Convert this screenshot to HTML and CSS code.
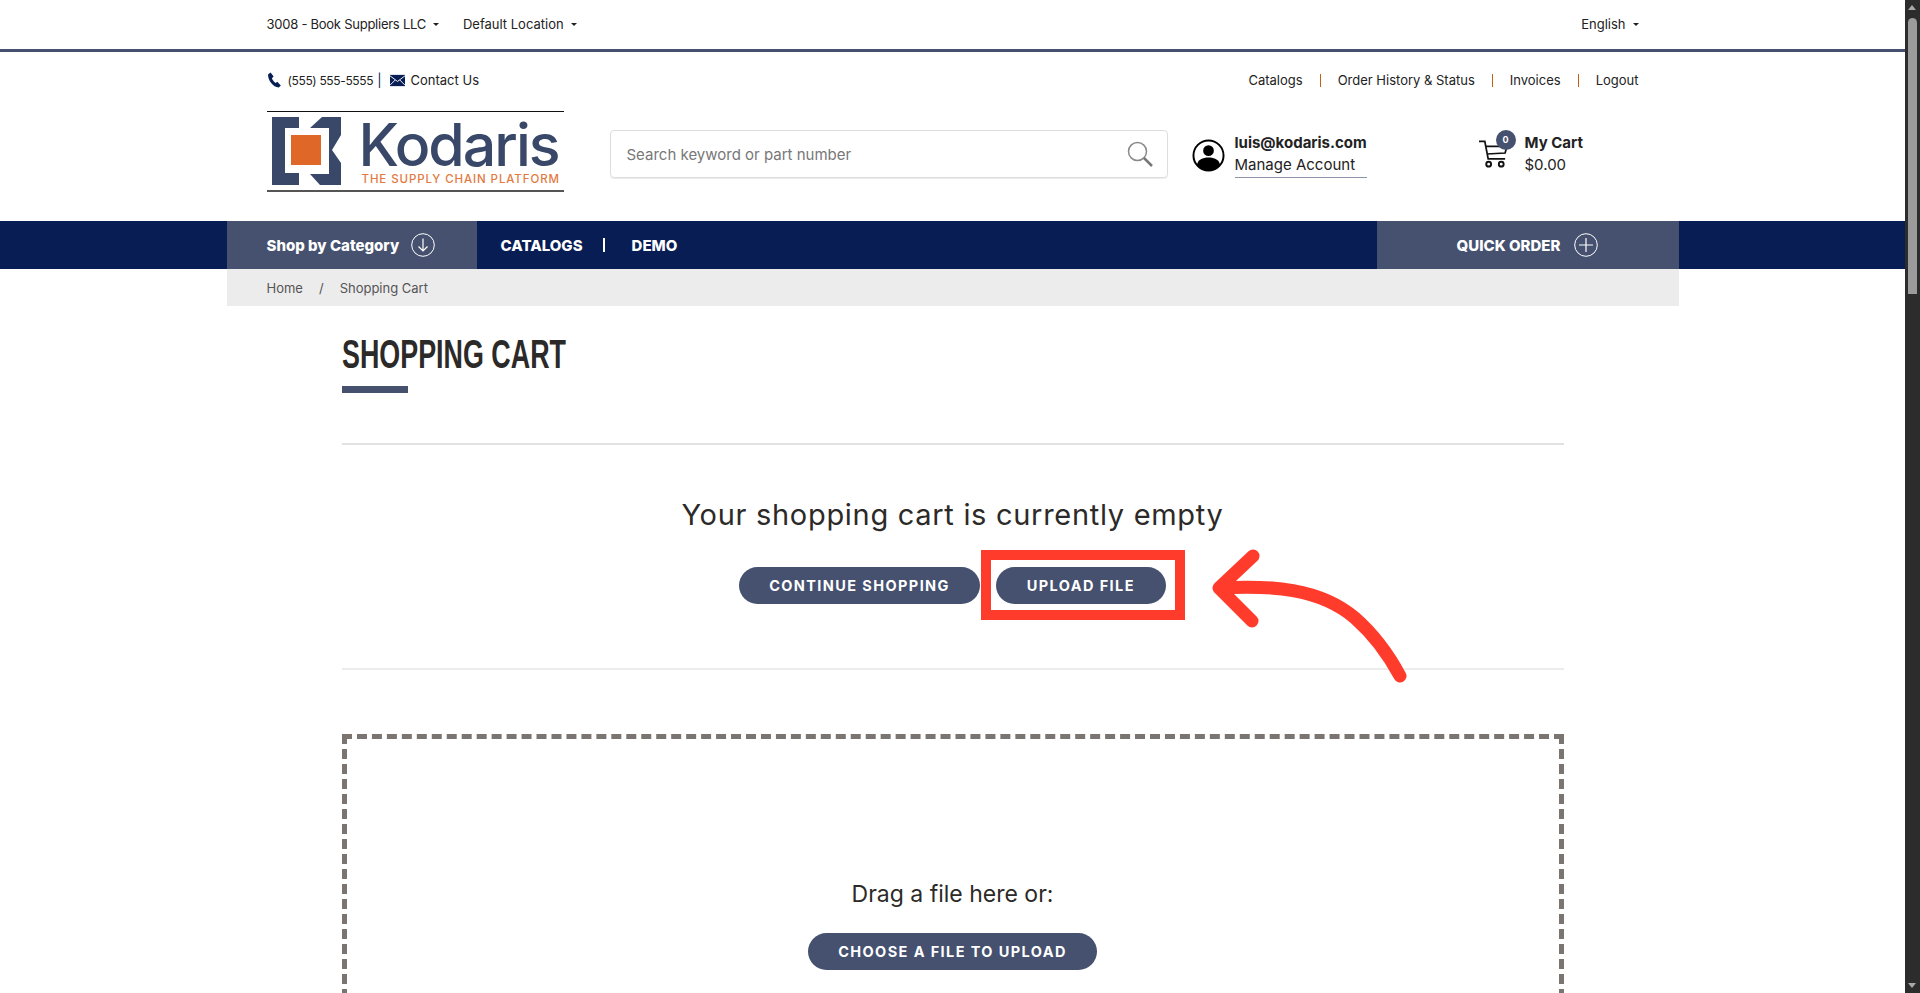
FILE: index.html
```html
<!DOCTYPE html>
<html lang="en">
<head>
  <meta charset="UTF-8">
  <meta name="viewport" content="width=device-width, initial-scale=1.0">
  <title>Shopping Cart</title>
  <link rel="stylesheet" href="styles.css">
</head>
<body>
  <div class="scrollbar">
    <span class="arrow-up"></span>
    <span class="thumb"></span>
    <span class="arrow-down"></span>
  </div>

  <div class="topbar">
    <div class="inner topbar-row">
      <div class="topbar-left">
        <span class="caret company">3008 - Book Suppliers LLC</span>
        <span class="caret">Default Location</span>
      </div>
      <span class="caret">English</span>
    </div>
  </div>

  <header class="inner header">
    <div class="contact-row">
      <div class="contact">
        <svg class="ico-phone" viewBox="0 0 16 16"><path fill="#071d54" d="M1 2.6 3.6.6l3 4-1.7 1.600c.5 1.700 2 3.700 3.700 4.700l1.700-1.200 3.500 3.700-2 2.200C6 15.300 1 8.500 1 2.600z"/></svg>
        <span class="phone">(555) 555-5555</span>
        <span class="bar">|</span>
        <svg class="ico-mail" viewBox="0 0 16 12"><path fill="#071d54" d="M0 0h16v12H0z"/><path fill="none" stroke="#fff" d="M0 1l8 6 8-6M0 11l5.500-5.500M16 11l-5.500-5.500"/></svg>
        <span>Contact Us</span>
      </div>
      <nav class="links">
        <a>Catalogs</a><i></i><a>Order History &amp; Status</a><i></i><a>Invoices</a><i></i><a>Logout</a>
      </nav>
    </div>

    <div class="brand-row">
      <div class="logo">
        <svg class="logo-mark" viewBox="0 0 70 70">
          <path fill="#394868" d="M0 1h27v11H13v45h14v12H0z"/>
          <path fill="#394868" d="M38 12 50 1h19v18L60 34l9 13v22H48L38 58h19V12z"/>
          <path fill="#df6727" d="M19 19h30v30H19z"/>
        </svg>
        <div class="logo-text">
          <span class="logo-name">Kodaris</span>
          <span class="logo-tag">THE SUPPLY CHAIN PLATFORM</span>
        </div>
      </div>

      <div class="search">
        <span>Search keyword or part number</span>
        <svg class="search-ico" viewBox="0 0 26 26"><circle cx="10.500" cy="10.500" r="9" fill="none" stroke="#8a8a8a" stroke-width="1.500"/><path d="M17 17l8 8" stroke="#777" stroke-width="2.500" fill="none"/></svg>
      </div>

      <div class="account">
        <svg class="account-ico" viewBox="0 0 34 34">
          <circle cx="17" cy="17" r="15.500" fill="#fff" stroke="#000" stroke-width="2"/>
          <circle cx="17" cy="12" r="5.500"/>
          <path d="M5 27c1-6 6-8 12-8s11 2 12 8c-3 4-7 6-12 6S8 31 5 27z"/>
        </svg>
        <div class="account-text">
          <strong>luis@kodaris.com</strong>
          <span>Manage Account</span>
        </div>
      </div>

      <div class="cart">
        <div class="cart-ico">
          <svg viewBox="0 0 30 28"><path fill="none" stroke="#111" stroke-width="1.800" d="M0 1h6l3.500 18H27M7 6h22l-2 7-19 1"/><circle cx="10" cy="24.500" r="2.500" fill="none" stroke="#111" stroke-width="2"/><circle cx="23" cy="24.500" r="2.500" fill="none" stroke="#111" stroke-width="2"/></svg>
          <span class="badge">0</span>
        </div>
        <div class="cart-text">
          <strong>My Cart</strong>
          <span>$0.00</span>
        </div>
      </div>
    </div>
  </header>

  <div class="navbar">
    <div class="inner nav-row">
      <div class="nav-block shop">
        <span>Shop by Category</span>
        <svg class="nav-ico" viewBox="0 0 24 24"><circle cx="12" cy="12" r="11.300" fill="none" stroke="#fff"/><path fill="none" stroke="#fff" stroke-width="1.200" d="M12 5.500v12.500M7.500 13.500 12 18l4.500-4.500"/></svg>
      </div>
      <div class="nav-links">
        <span>CATALOGS</span>
        <span class="nav-sep"></span>
        <span>DEMO</span>
      </div>
      <div class="nav-block quick">
        <span>QUICK ORDER</span>
        <svg class="nav-ico" viewBox="0 0 24 24"><circle cx="12" cy="12" r="11.300" fill="none" stroke="#fff"/><path fill="none" stroke="#fff" stroke-width="1.200" d="M12 5v14M5 12h14"/></svg>
      </div>
    </div>
  </div>

  <div class="inner crumbs">
    <span>Home</span>
    <span>/</span>
    <span>Shopping Cart</span>
  </div>

  <main class="content">
    <h1>SHOPPING CART</h1>
    <div class="title-bar"></div>
    <hr class="rule-first">
    <h2>Your shopping cart is currently empty</h2>
    <div class="actions">
      <a class="btn">CONTINUE SHOPPING</a>
      <a class="btn btn-upload">UPLOAD FILE</a>
    </div>
    <hr class="rule-second">
    <div class="dropzone">
      <p>Drag a file here or:</p>
      <a class="btn">CHOOSE A FILE TO UPLOAD</a>
    </div>
  </main>

  <!-- annotation drawn over the page -->
  <div class="highlight"></div>
  <svg class="pointer" viewBox="0 0 220 150">
    <path fill="none" stroke="#ff3b2c" stroke-width="13" stroke-linecap="round" stroke-linejoin="round" d="M58 13 24 45l33 33M24 45C75 42 125 45 160 75c25 22 38 45 45 58"/>
  </svg>
</body>
</html>
```

FILE: styles.css
```css
* {
  box-sizing: border-box;
}
html, body {
  height: 993px;
  overflow: hidden;
}
body {
  margin: 0;
  background-color: white;
  color: #222;
  font-family: Inter, "Liberation Sans", sans-serif;
  font-size: 13px;
  padding-right: 15px;
}
.inner {
  width: 1452px;
  margin: 0 auto;
}
.scrollbar {
  position: fixed;
  top: 0;
  right: 0;
  bottom: 0;
  width: 15px;
  background-color: #2c2c2c;
  z-index: 5;
}
.thumb {
  position: absolute;
  top: 18px;
  left: 3px;
  width: 9px;
  height: 276px;
  border-radius: 5px 5px 0 0;
  background-color: #9b9b9b;
}
.arrow-up, .arrow-down {
  position: absolute;
  left: 3px;
  border-left: 4.500px solid transparent;
  border-right: 4.500px solid transparent;
}
.arrow-up {
  top: 5px;
  border-bottom: 5px solid #a8a8a8;
}
.arrow-down {
  bottom: 5px;
  border-top: 5px solid #a8a8a8;
}

.topbar {
  height: 52px;
  border-bottom: 3px solid #45516f;
}
.topbar-row {
  display: flex;
  justify-content: space-between;
  align-items: center;
  height: 47px;
  padding: 0 40px;
}
.topbar-left {
  display: flex;
  gap: 24px;
}
.company {
  letter-spacing: -0.25px;
}
.caret::after {
  content: "";
  display: inline-block;
  margin-left: 7px;
  vertical-align: 3px;
  border-left: 3px solid transparent;
  border-right: 3px solid transparent;
  border-top: 3px solid #222;
}

.header {
  height: 169px;
  padding: 0 40px;
}
.contact-row {
  display: flex;
  justify-content: space-between;
  align-items: center;
  height: 56px;
}
.contact {
  display: flex;
  align-items: center;
  gap: 6px;
}
.ico-phone {
  width: 16px;
  height: 16px;
  margin-right: -1px;
}
.ico-mail {
  width: 15px;
  height: 15px;
}
.phone {
  font-size: 12px;
  letter-spacing: -0.35px;
}
.bar {
  margin: 0 2px 0 -2px;
  color: #071d54;
}
.links {
  display: flex;
  align-items: center;
}
.links i {
  width: 1px;
  height: 13px;
  margin: 0 17px;
  background-color: #c4600f;
}

.brand-row {
  display: flex;
  align-items: flex-start;
  padding-top: 3px;
}
.logo {
  display: flex;
  align-items: center;
  gap: 17px;
  width: 297px;
  height: 81px;
  padding-left: 5px;
  border-top: 1px solid #111;
  border-bottom: 2px solid #555;
}
.logo-mark {
  width: 70px;
  height: 70px;
}
.logo-text {
  display: flex;
  flex-direction: column;
  align-items: flex-start;
  margin-top: 4px;
}
.logo-name {
  font-size: 59px;
  font-weight: 500;
  line-height: 52px;
  color: #394868;
  letter-spacing: -2px;
}
.logo-tag {
  margin-left: 3px;
  font-size: 11.500px;
  font-weight: 500;
  line-height: 16px;
  color: #e37a3f;
  letter-spacing: 0.9px;
  white-space: nowrap;
}
.search {
  display: flex;
  justify-content: space-between;
  align-items: center;
  width: 558px;
  height: 48px;
  margin: 19px 0 0 46px;
  padding: 0 14px 0 16px;
  border: 1px solid #ddd;
  border-radius: 4px;
  box-shadow: 0 1px 1px rgba(0, 0, 0, 0.08);
  color: #777;
  font-size: 15px;
}
.search-ico {
  width: 26px;
  height: 26px;
}
.account {
  display: flex;
  align-items: center;
  gap: 10px;
  width: 287px;
  margin: 21px 0 0 24px;
}
.account-ico {
  width: 33px;
  height: 33px;
}
.account-text, .cart-text {
  display: flex;
  flex-direction: column;
  line-height: 22px;
  font-size: 15px;
}
.account-text span {
  border-bottom: 1px solid #8a93a8;
  padding-bottom: 1px;
}
.cart {
  display: flex;
  align-items: center;
  gap: 17px;
  margin-top: 21px;
}
.cart-ico {
  position: relative;
  width: 29px;
  height: 28px;
}
.cart-ico svg {
  display: block;
  width: 29px;
  height: 28px;
}
.badge {
  position: absolute;
  top: -10px;
  right: -8px;
  width: 20px;
  height: 20px;
  border-radius: 50%;
  background-color: #45516f;
  color: white;
  font-size: 9px;
  font-weight: 700;
  line-height: 20px;
  text-align: center;
}

.navbar {
  background-color: #071d54;
  color: white;
  font-weight: 800;
  font-size: 15px;
}
.nav-row {
  display: flex;
  height: 48px;
}
.nav-block {
  display: flex;
  align-items: center;
  background-color: #45516f;
}
.shop {
  width: 250px;
  padding-left: 40px;
  gap: 12px;
}
.nav-ico {
  width: 24px;
  height: 24px;
}
.nav-links {
  display: flex;
  align-items: center;
  flex: 1;
  padding-left: 24px;
}
.nav-sep {
  width: 2px;
  height: 14px;
  margin: 0 27px 0 20px;
  background-color: white;
}
.quick {
  justify-content: center;
  gap: 14px;
  width: 302px;
}

.crumbs {
  display: flex;
  align-items: center;
  gap: 16px;
  height: 37px;
  padding-left: 40px;
  background-color: #ececec;
  color: #555;
}

.content {
  width: 1222px;
  margin: 0 auto;
}
/* no condensed face installed, so the heading is squeezed */
h1 {
  margin: 0 0 3px;
  padding-top: 19px;
  font-family: "Liberation Sans", sans-serif;
  font-size: 40px;
  font-weight: 700;
  line-height: 58px;
  color: #2c2a28;
  transform: scaleX(0.672);
  transform-origin: left center;
  white-space: nowrap;
}
.title-bar {
  width: 66px;
  height: 7px;
  background-color: #45516f;
}
hr {
  margin: 0;
  border: none;
  height: 2px;
  background-color: #e2e2e2;
}
.rule-first {
  margin-top: 50px;
}
h2 {
  margin: 51px 0 0;
  font-size: 29px;
  font-weight: 400;
  line-height: 38px;
  letter-spacing: 0.7px;
  text-align: center;
  color: #2c2a28;
}
.actions {
  display: flex;
  justify-content: center;
  gap: 16px;
  margin-top: 33px;
}
.btn {
  display: inline-block;
  padding: 0 30px;
  height: 37px;
  border-radius: 19px;
  background-color: #45516f;
  color: white;
  font-size: 14.500px;
  font-weight: 700;
  line-height: 37px;
  letter-spacing: 1.400px;
  text-align: center;
  white-space: nowrap;
}
.btn-upload {
  min-width: 170px;
}
.rule-second {
  margin-top: 64px;
  background-color: #ececec;
}
.dropzone {
  height: 400px;
  margin-top: 64px;
  padding-top: 140px;
  border: 5px dashed #7a7570;
  text-align: center;
}
.dropzone p {
  margin: 0 0 24px;
  font-size: 23px;
  line-height: 30px;
  color: #2c2a28;
}

.highlight {
  position: absolute;
  left: 981px;
  top: 550px;
  width: 204px;
  height: 70px;
  border: 10px solid #ff3b2c;
}
.pointer {
  position: absolute;
  left: 1195px;
  top: 543px;
  width: 220px;
  height: 150px;
}
```
